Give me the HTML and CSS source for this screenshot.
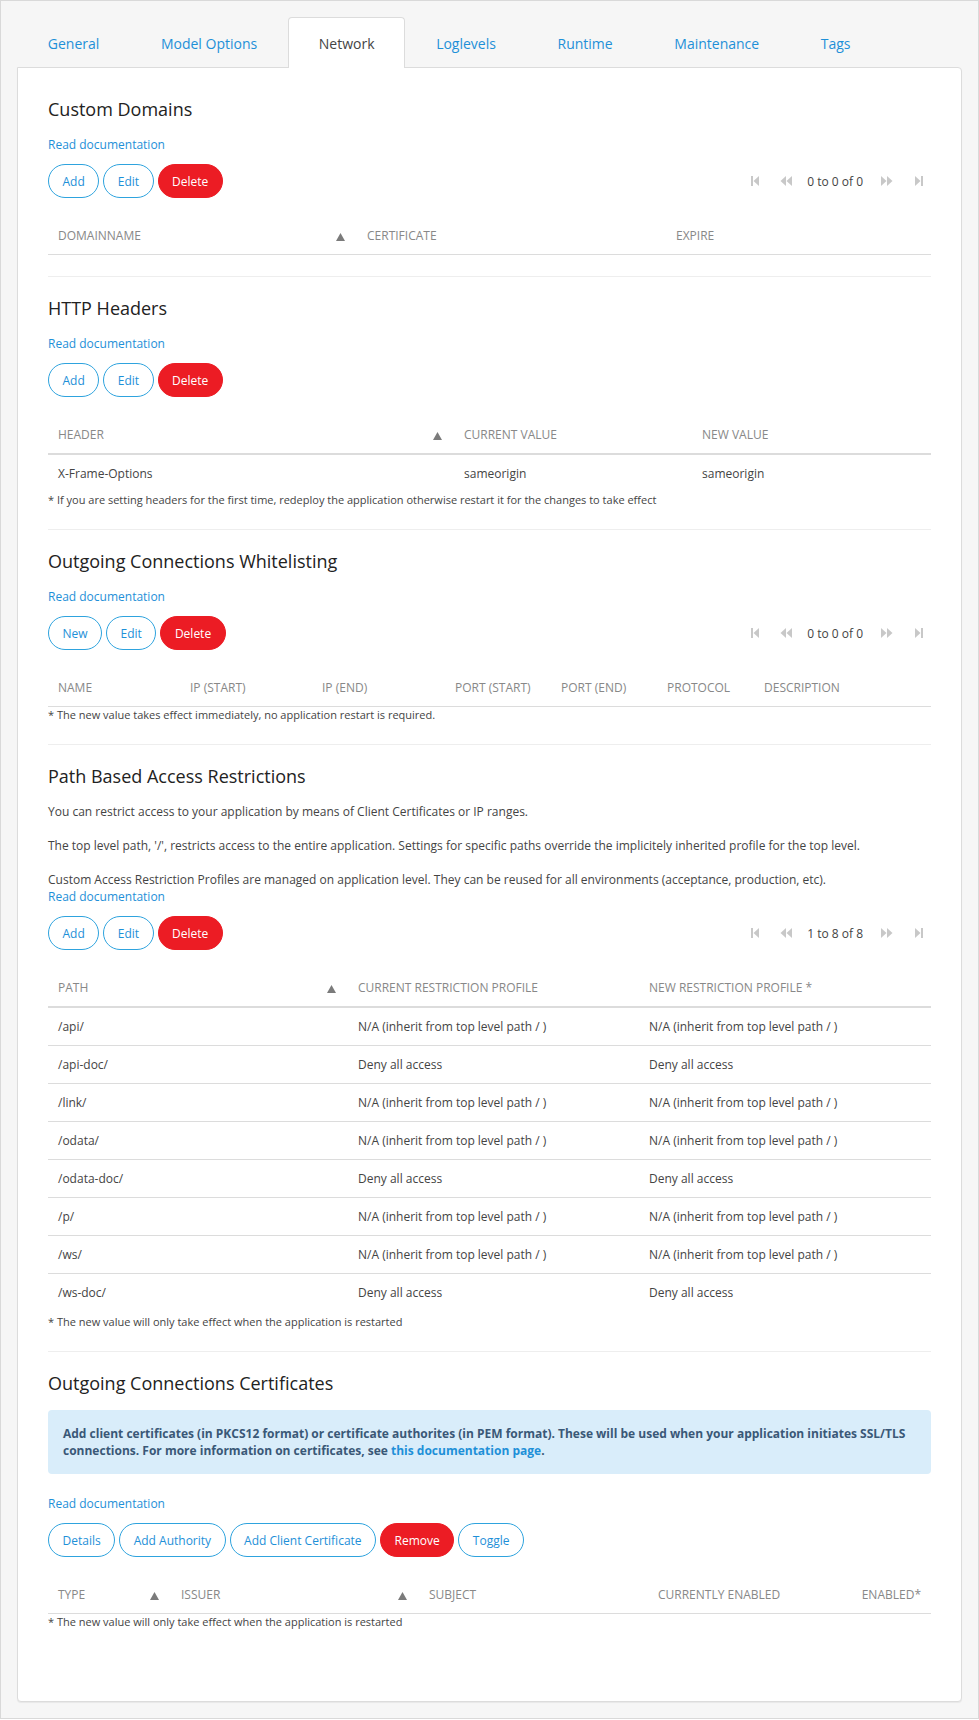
FILE: index.html
```html
<!DOCTYPE html>
<html lang="en">
<head>
<meta charset="utf-8">
<title>Network</title>
<link rel="stylesheet" href="styles.css">
</head>
<body>
<div class="page">
  <ul class="tabs">
    <li><a class="tab" href="#">General</a></li>
    <li><a class="tab" href="#">Model Options</a></li>
    <li><a class="tab active" href="#">Network</a></li>
    <li><a class="tab" href="#">Loglevels</a></li>
    <li><a class="tab" href="#">Runtime</a></li>
    <li><a class="tab" href="#">Maintenance</a></li>
    <li><a class="tab" href="#">Tags</a></li>
  </ul>

  <div class="panel">

    <section class="section">
      <h2 class="title">Custom Domains</h2>
      <a class="doc" href="#">Read documentation</a>
      <div class="toolbar">
        <div class="btns">
          <button class="btn">Add</button>
          <button class="btn">Edit</button>
          <button class="btn danger">Delete</button>
        </div>
        <div class="pager">
          <span class="pg pg-first"><svg width="8" height="10" viewBox="0 0 8 10"><rect x="0" y="0" width="2" height="10" fill="#c8c8c8"/><polygon points="8,0 2.5,5 8,10" fill="#c8c8c8"/></svg></span>
          <span class="pg pg-prev"><svg width="12" height="10" viewBox="0 0 12 10"><polygon points="6,0 0.5,5 6,10" fill="#c8c8c8"/><polygon points="12,0 6.5,5 12,10" fill="#c8c8c8"/></svg></span>
          <span class="pg-text">0 to 0 of 0</span>
          <span class="pg pg-next"><svg width="12" height="10" viewBox="0 0 12 10"><polygon points="0,0 5.5,5 0,10" fill="#c8c8c8"/><polygon points="6,0 11.5,5 6,10" fill="#c8c8c8"/></svg></span>
          <span class="pg pg-last"><svg width="8" height="10" viewBox="0 0 8 10"><polygon points="0,0 5.5,5 0,10" fill="#c8c8c8"/><rect x="6" y="0" width="2" height="10" fill="#c8c8c8"/></svg></span>
        </div>
      </div>
      <table class="grid">
        <colgroup><col class="w309"><col class="w309"><col></colgroup>
        <thead>
          <tr><th><span class="sort"><svg width="9" height="8" viewBox="0 0 9 8"><polygon points="4.5,0 9,8 0,8" fill="#7b7b7b"/></svg></span>Domainname</th><th>Certificate</th><th>Expire</th></tr>
        </thead>
      </table>
    </section>

    <section class="section">
      <h2 class="title">HTTP Headers</h2>
      <a class="doc" href="#">Read documentation</a>
      <div class="toolbar">
        <div class="btns">
          <button class="btn">Add</button>
          <button class="btn">Edit</button>
          <button class="btn danger">Delete</button>
        </div>
      </div>
      <table class="grid">
        <colgroup><col class="w406"><col class="w238"><col></colgroup>
        <thead>
          <tr><th><span class="sort"><svg width="9" height="8" viewBox="0 0 9 8"><polygon points="4.5,0 9,8 0,8" fill="#7b7b7b"/></svg></span>Header</th><th>Current Value</th><th>New Value</th></tr>
        </thead>
        <tbody>
          <tr><td>X-Frame-Options</td><td>sameorigin</td><td>sameorigin</td></tr>
        </tbody>
      </table>
      <p class="note">* If you are setting headers for the first time, redeploy the application otherwise restart it for the changes to take effect</p>
    </section>

    <section class="section">
      <h2 class="title">Outgoing Connections Whitelisting</h2>
      <a class="doc" href="#">Read documentation</a>
      <div class="toolbar">
        <div class="btns">
          <button class="btn">New</button>
          <button class="btn">Edit</button>
          <button class="btn danger">Delete</button>
        </div>
        <div class="pager">
          <span class="pg pg-first"><svg width="8" height="10" viewBox="0 0 8 10"><rect x="0" y="0" width="2" height="10" fill="#c8c8c8"/><polygon points="8,0 2.5,5 8,10" fill="#c8c8c8"/></svg></span>
          <span class="pg pg-prev"><svg width="12" height="10" viewBox="0 0 12 10"><polygon points="6,0 0.5,5 6,10" fill="#c8c8c8"/><polygon points="12,0 6.5,5 12,10" fill="#c8c8c8"/></svg></span>
          <span class="pg-text">0 to 0 of 0</span>
          <span class="pg pg-next"><svg width="12" height="10" viewBox="0 0 12 10"><polygon points="0,0 5.5,5 0,10" fill="#c8c8c8"/><polygon points="6,0 11.5,5 6,10" fill="#c8c8c8"/></svg></span>
          <span class="pg pg-last"><svg width="8" height="10" viewBox="0 0 8 10"><polygon points="0,0 5.5,5 0,10" fill="#c8c8c8"/><rect x="6" y="0" width="2" height="10" fill="#c8c8c8"/></svg></span>
        </div>
      </div>
      <table class="grid">
        <colgroup><col class="w132"><col class="w132"><col class="w133"><col class="w106"><col class="w106"><col class="w97"><col></colgroup>
        <thead>
          <tr><th>Name</th><th>IP (Start)</th><th>IP (End)</th><th>Port (Start)</th><th>Port (End)</th><th>Protocol</th><th>Description</th></tr>
        </thead>
      </table>
      <p class="note">* The new value takes effect immediately, no application restart is required.</p>
    </section>

    <section class="section">
      <h2 class="title">Path Based Access Restrictions</h2>
      <p class="para">You can restrict access to your application by means of Client Certificates or IP ranges.</p>
      <p class="para">The top level path, '/', restricts access to the entire application. Settings for specific paths override the implicitely inherited profile for the top level.</p>
      <p class="para last">Custom Access Restriction Profiles are managed on application level. They can be reused for all environments (acceptance, production, etc).</p>
      <a class="doc tight" href="#">Read documentation</a>
      <div class="toolbar">
        <div class="btns">
          <button class="btn">Add</button>
          <button class="btn">Edit</button>
          <button class="btn danger">Delete</button>
        </div>
        <div class="pager">
          <span class="pg pg-first"><svg width="8" height="10" viewBox="0 0 8 10"><rect x="0" y="0" width="2" height="10" fill="#c8c8c8"/><polygon points="8,0 2.5,5 8,10" fill="#c8c8c8"/></svg></span>
          <span class="pg pg-prev"><svg width="12" height="10" viewBox="0 0 12 10"><polygon points="6,0 0.5,5 6,10" fill="#c8c8c8"/><polygon points="12,0 6.5,5 12,10" fill="#c8c8c8"/></svg></span>
          <span class="pg-text">1 to 8 of 8</span>
          <span class="pg pg-next"><svg width="12" height="10" viewBox="0 0 12 10"><polygon points="0,0 5.5,5 0,10" fill="#c8c8c8"/><polygon points="6,0 11.5,5 6,10" fill="#c8c8c8"/></svg></span>
          <span class="pg pg-last"><svg width="8" height="10" viewBox="0 0 8 10"><polygon points="0,0 5.5,5 0,10" fill="#c8c8c8"/><rect x="6" y="0" width="2" height="10" fill="#c8c8c8"/></svg></span>
        </div>
      </div>
      <table class="grid">
        <colgroup><col class="w300"><col class="w291"><col></colgroup>
        <thead>
          <tr><th><span class="sort"><svg width="9" height="8" viewBox="0 0 9 8"><polygon points="4.5,0 9,8 0,8" fill="#7b7b7b"/></svg></span>Path</th><th>Current Restriction Profile</th><th>New Restriction Profile *</th></tr>
        </thead>
        <tbody>
          <tr><td>/api/</td><td>N/A (inherit from top level path / )</td><td>N/A (inherit from top level path / )</td></tr>
          <tr><td>/api-doc/</td><td>Deny all access</td><td>Deny all access</td></tr>
          <tr><td>/link/</td><td>N/A (inherit from top level path / )</td><td>N/A (inherit from top level path / )</td></tr>
          <tr><td>/odata/</td><td>N/A (inherit from top level path / )</td><td>N/A (inherit from top level path / )</td></tr>
          <tr><td>/odata-doc/</td><td>Deny all access</td><td>Deny all access</td></tr>
          <tr><td>/p/</td><td>N/A (inherit from top level path / )</td><td>N/A (inherit from top level path / )</td></tr>
          <tr><td>/ws/</td><td>N/A (inherit from top level path / )</td><td>N/A (inherit from top level path / )</td></tr>
          <tr><td>/ws-doc/</td><td>Deny all access</td><td>Deny all access</td></tr>
        </tbody>
      </table>
      <p class="note spaced">* The new value will only take effect when the application is restarted</p>
    </section>

    <section class="section final">
      <h2 class="title">Outgoing Connections Certificates</h2>
      <div class="info">Add client certificates (in PKCS12 format) or certificate authorites (in PEM format). These will be used when your application initiates SSL/TLS connections. For more information on certificates, see <a href="#">this documentation page</a>.</div>
      <a class="doc after-info" href="#">Read documentation</a>
      <div class="toolbar">
        <div class="btns">
          <button class="btn">Details</button>
          <button class="btn">Add Authority</button>
          <button class="btn">Add Client Certificate</button>
          <button class="btn danger">Remove</button>
          <button class="btn">Toggle</button>
        </div>
      </div>
      <table class="grid">
        <colgroup><col class="w123"><col class="w248"><col class="w229"><col class="w172"><col></colgroup>
        <thead>
          <tr><th><span class="sort"><svg width="9" height="8" viewBox="0 0 9 8"><polygon points="4.5,0 9,8 0,8" fill="#7b7b7b"/></svg></span>Type</th><th><span class="sort"><svg width="9" height="8" viewBox="0 0 9 8"><polygon points="4.5,0 9,8 0,8" fill="#7b7b7b"/></svg></span>Issuer</th><th>Subject</th><th>Currently Enabled</th><th class="right">Enabled*</th></tr>
        </thead>
      </table>
      <p class="note">* The new value will only take effect when the application is restarted</p>
    </section>

  </div>
</div>
</body>
</html>
```

FILE: styles.css
```css
* { box-sizing: border-box; }

body {
  margin: 0;
  font-family: "Open Sans", "Noto Sans", sans-serif;
  color: #444;
  font-size: 12px;
}

.page {
  border: 1px solid #d9d9d9;
  background: #f6f6f6;
  padding: 16px;
  min-height: 1719px;
}

/* Tabs */
.tabs {
  list-style: none;
  margin: 0;
  padding: 0;
  display: flex;
  position: relative;
  z-index: 1;
}

.tab {
  display: block;
  padding: 3px 29.8px 0;
  line-height: 46px;
  font-size: 14px;
  color: #1e90d8;
  text-decoration: none;
  border: 1px solid transparent;
  border-bottom: 0;
  border-radius: 4px 4px 0 0;
}

.tab.active {
  background: #fff;
  color: #444;
  border-color: #dcdcdc;
  margin-bottom: -1px;
  padding-bottom: 1px;
}

/* Panel */
.panel {
  background: #fff;
  border: 1px solid #dcdcdc;
  border-radius: 0 4px 4px 4px;
  box-shadow: 0 1px 1px rgba(0, 0, 0, 0.06);
  padding: 29px 30px 30px;
}

.section {
  border-bottom: 1px solid #eeeeee;
  padding: 0 0 21px;
  margin-bottom: 19px;
}

.section.final {
  border-bottom: 0;
  margin-bottom: 0;
  padding-bottom: 41px;
}

.title {
  margin: 0;
  font-size: 18px;
  line-height: 24px;
  font-weight: 400;
  color: #222;
}

.doc {
  display: block;
  width: fit-content;
  margin-top: 16px;
  font-size: 12px;
  line-height: 16px;
  color: #1e90d8;
  text-decoration: none;
}

.doc.tight { margin-top: 1px; }
.doc.after-info { margin-top: 22px; }

.para {
  margin: 15px 0 0;
  font-size: 12px;
  line-height: 17px;
  color: #444;
}

.para + .para { margin-top: 17px; }

/* Toolbar */
.toolbar {
  display: flex;
  align-items: center;
  justify-content: space-between;
  margin-top: 11px;
  height: 34px;
}

.btns {
  display: flex;
  gap: 4px;
}

.btn {
  font-family: "Open Sans", "Noto Sans", sans-serif;
  font-size: 12px;
  height: 34px;
  padding: 0 13.5px;
  border: 1px solid #2ea3de;
  border-radius: 17px;
  background: #fff;
  color: #1e90d8;
  cursor: pointer;
}

.btn.danger {
  background: #ec1c24;
  border-color: #ec1c24;
  color: #fff;
}

.pager {
  display: flex;
  align-items: center;
  margin-right: 8px;
}

.pg {
  display: flex;
  align-items: center;
  justify-content: center;
  height: 34px;
}

.pg-first { margin-right: 21px; }
.pg-prev { margin-right: 15px; }
.pg-text { font-size: 12px; color: #444; }
.pg-next { margin-left: 18px; margin-right: 22px; }

/* Tables */
.grid {
  width: 100%;
  border-collapse: collapse;
  table-layout: fixed;
  margin-top: 19px;
}

.grid th {
  text-align: left;
  font-weight: 400;
  text-transform: uppercase;
  color: #888;
  font-size: 12px;
  line-height: 37px;
  padding: 0 10px;
  border-bottom: 1px solid #dcdcdc;
  white-space: nowrap;
}

.grid th.right { text-align: right; }

.grid td {
  font-size: 12px;
  line-height: 37px;
  padding: 0 10px;
  color: #444;
  border-top: 1px solid #dcdcdc;
  white-space: nowrap;
}

.grid tbody tr:first-child td { border-top-width: 2px; }

.sort {
  float: right;
  margin-right: 2px;
}

.sort svg { vertical-align: -1px; }

.w309 { width: 309px; }
.w406 { width: 406px; }
.w238 { width: 238px; }
.w132 { width: 132px; }
.w133 { width: 133px; }
.w106 { width: 106px; }
.w97 { width: 97px; }
.w300 { width: 300px; }
.w291 { width: 291px; }
.w123 { width: 123px; }
.w248 { width: 248px; }
.w229 { width: 229px; }
.w172 { width: 172px; }

.note {
  margin: 0;
  width: fit-content;
  font-size: 11px;
  line-height: 16px;
  color: #444;
}

.note.spaced { margin-top: 3px; }

/* Info box */
.info {
  margin-top: 15px;
  background: #d9edfa;
  border-radius: 4px;
  padding: 15px;
  font-size: 12px;
  line-height: 17px;
  font-weight: 700;
  color: #3a5877;
}

.info a {
  color: #1e90d8;
  text-decoration: none;
}
```
